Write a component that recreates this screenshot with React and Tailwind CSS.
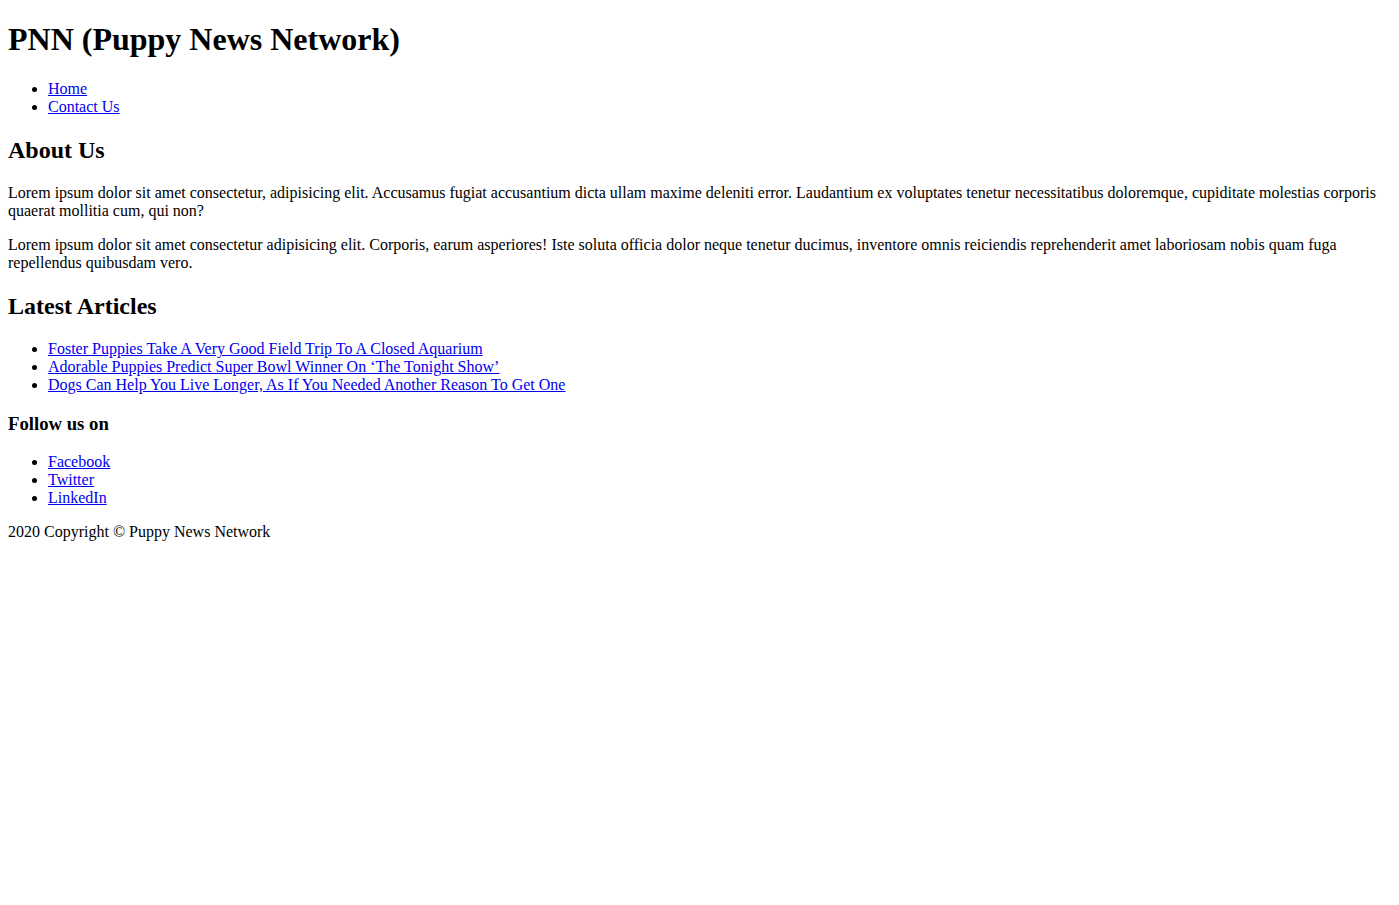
import React from 'react';

const link = 'text-[#0000ee] underline';

const App = () => {
  return (
    <div className="m-2 font-['Liberation_Serif',serif] text-base leading-[normal] text-black">
      <header>
        <h1 className="text-[32px] leading-[normal] font-bold my-[21.44px]">PNN (Puppy News Network)</h1>
        <nav>
          <ul className="list-disc pl-10 my-4">
            <li><a href="#" className={link}>Home</a></li>
            <li><a href="#" className={link}>Contact Us</a></li>
          </ul>
        </nav>
      </header>

      <main>
        <section>
          <h2 className="text-2xl leading-[28.2px] font-bold my-[19.92px]">About Us</h2>
          <p className="my-4">
            Lorem ipsum dolor sit amet consectetur, adipisicing elit. Accusamus fugiat accusantium dicta ullam maxime deleniti error. Laudantium ex voluptates tenetur necessitatibus doloremque, cupiditate molestias corporis quaerat mollitia cum, qui non?
          </p>
          <p className="my-4">
            Lorem ipsum dolor sit amet consectetur adipisicing elit. Corporis, earum asperiores! Iste soluta officia dolor neque tenetur ducimus, inventore omnis reiciendis reprehenderit amet laboriosam nobis quam fuga repellendus quibusdam vero.
          </p>
        </section>

        <section>
          <h2 className="text-2xl leading-[28.2px] font-bold my-[19.92px]">Latest Articles</h2>
          <ul className="list-disc pl-10 my-4">
            <li><a href="#" className={link}>Foster Puppies Take A Very Good Field Trip To A Closed Aquarium</a></li>
            <li><a href="#" className={link}>Adorable Puppies Predict Super Bowl Winner On ‘The Tonight Show’</a></li>
            <li><a href="#" className={link}>Dogs Can Help You Live Longer, As If You Needed Another Reason To Get One</a></li>
          </ul>
        </section>
      </main>

      <footer>
        <h3 className="text-[18.72px] leading-[21.5px] font-bold my-[18.72px]">Follow us on</h3>
        <ul className="list-disc pl-10 my-4">
          <li><a href="#" className={link}>Facebook</a></li>
          <li><a href="#" className={link}>Twitter</a></li>
          <li><a href="#" className={link}>LinkedIn</a></li>
        </ul>
        <p className="my-4">2020 Copyright © Puppy News Network</p>
      </footer>
    </div>
  );
};

export default App;
